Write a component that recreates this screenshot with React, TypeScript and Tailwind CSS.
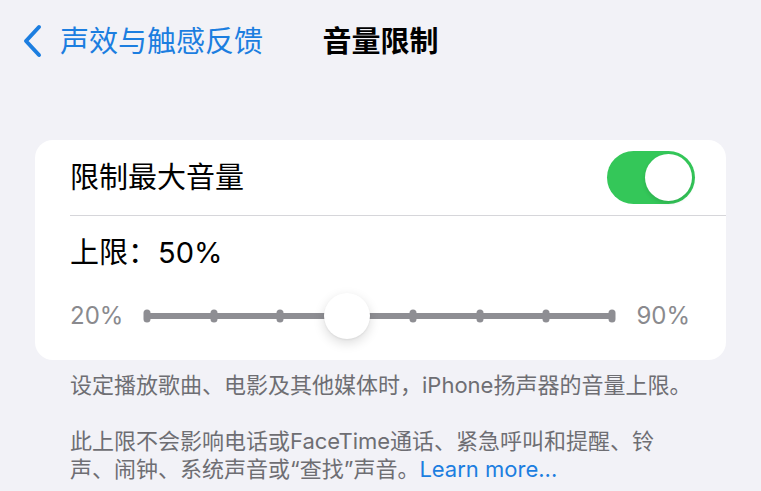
const font = { fontFamily: 'Inter, "Noto Sans CJK SC", sans-serif' };

const ticks = [0, 1, 2, 4, 5, 6, 7];

function Toggle() {
  return (
    <div className="relative h-[53px] w-[88px] rounded-full bg-[#34c759]">
      <div className="absolute right-[3px] top-[3px] h-[47px] w-[47px] rounded-full bg-white shadow-[0_2px_4px_rgba(0,0,0,0.12)]" />
    </div>
  );
}

function LevelSlider({ step }: { step: number }) {
  return (
    <div className="relative h-[46px] flex-1">
      <div className="absolute left-0 right-0 top-1/2 h-[6px] -translate-y-1/2 rounded-full bg-[#8e8e93]" />
      {ticks.map((t) => (
        <div
          key={t}
          className="absolute top-1/2 h-[13px] w-[7px] -translate-x-1/2 -translate-y-1/2 rounded-full bg-[#8e8e93]"
          style={{ left: `${(t / 7) * 100}%` }}
        />
      ))}
      <div
        className="absolute top-0 h-[46px] w-[46px] -translate-x-1/2 rounded-full bg-white shadow-[0_4px_12px_rgba(0,0,0,0.14),0_1px_2px_rgba(0,0,0,0.06)]"
        style={{ left: `${(step / 7) * 100}%` }}
      />
    </div>
  );
}

export default function App() {
  return (
    <div className="h-[491px] w-[761px] overflow-hidden bg-[#f2f2f7]" style={font}>
      <div className="grid h-[82px] grid-cols-[1fr_auto_1fr] items-center">
        <div className="flex items-center pl-[20px] text-[#1c7ee0]">
          <svg width="26" height="34" viewBox="0 0 26 34" fill="none">
            <path d="M19 3 L6 17 L19 31" stroke="currentColor" strokeWidth="4" strokeLinecap="round" strokeLinejoin="round" />
          </svg>
          <span className="ml-[14px] text-[29px] leading-none">声效与触感反馈</span>
        </div>
        <h1 className="text-[29px] font-semibold leading-none text-black">音量限制</h1>
        <div />
      </div>

      <div className="mx-[35px] mt-[58px] rounded-[18px] bg-white">
        <div className="flex h-[75px] items-center justify-between pl-[35px] pr-[31px]">
          <span className="text-[29px] leading-none text-black">限制最大音量</span>
          <Toggle />
        </div>
        <div className="ml-[35px] h-px bg-[#d6d6da]" />
        <div className="pb-[21px] pl-[35px] pr-[36px] pt-[17px]">
          <div className="flex h-[40px] items-center text-[29px] text-black">
            上限：<span className="ml-[1px]">50%</span>
          </div>
          <div className="mt-[20px] flex items-center gap-[24px] text-[24px] text-[#8a8a8e]">
            <span>20%</span>
            <LevelSlider step={3} />
            <span>90%</span>
          </div>
        </div>
      </div>

      <div className="px-[70px] pt-[11px] text-[22px] leading-[28px] text-[#6e6e73]">
        <p className="whitespace-nowrap">设定播放歌曲、电影及其他媒体时，iPhone扬声器的音量上限。</p>
        <p className="mt-[28px] whitespace-nowrap">
          此上限不会影响电话或FaceTime通话、紧急呼叫和提醒、铃
          <br />
          声、闹钟、系统声音或“查找”声音。<span className="text-[#1c7ee0]">Learn more...</span>
        </p>
      </div>
    </div>
  );
}
